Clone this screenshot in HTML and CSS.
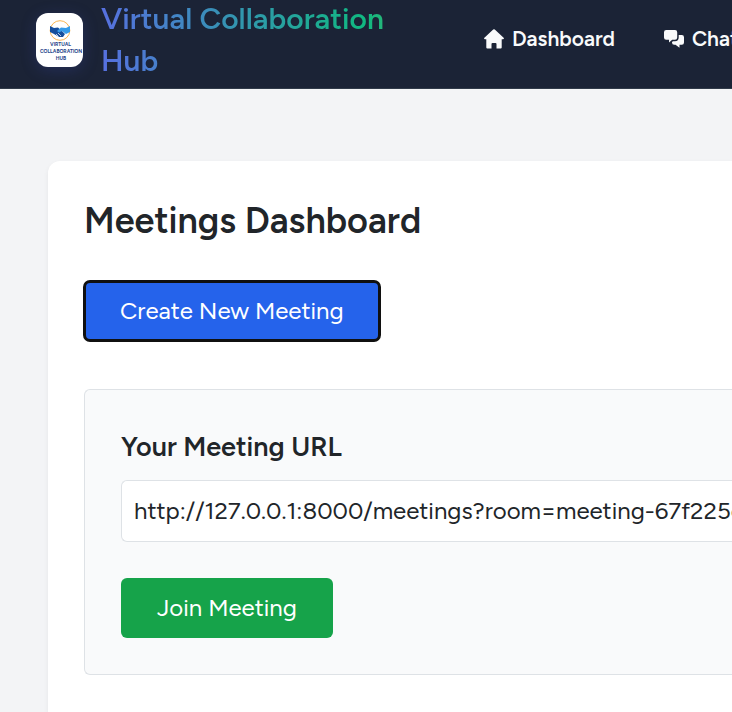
FILE: index.html
```html
<!DOCTYPE html>
<html lang="en">
<head>
<meta charset="utf-8">
<meta name="viewport" content="width=device-width, initial-scale=1">
<title>Meetings Dashboard</title>
<link rel="stylesheet" href="styles.css">
</head>
<body>
<header class="topbar">
  <a class="brand" href="#">
    <svg class="brand-logo" viewBox="0 0 47 54" aria-hidden="true">
      <circle cx="24" cy="17.500" r="9.800" fill="none" stroke="#f9b550" stroke-width="1"/>
      <path d="M14 13 18 15 22 14.500 26 18 29 21 27 24 23 24 18 21 14 19Z" fill="#174f9c"/>
      <path d="M34 13 30 15 25 14.500 21 18 23 19.500 26 18 30 21 34 19Z" fill="#369be8"/>
      <path d="m20 21 2.500 2.500m-.5-3.500 3 3" stroke="#fff" stroke-width=".7"/>
      <g class="logo-text" text-anchor="middle">
        <text x="24.500" y="33">VIRTUAL</text>
        <text x="25" y="40">COLLABORATION</text>
        <text x="25" y="47">HUB</text>
      </g>
    </svg>
    <span class="brand-name">Virtual Collaboration Hub</span>
  </a>
  <nav class="nav">
    <a class="nav-link" href="#">
      <svg class="icon" viewBox="0 0 20 20" aria-hidden="true"><path d="M9.200.6a1.200 1.200 0 0 1 1.600 0l8.800 8.200c.6.600.300 1.500-.6 1.500h-1.300V18.500q0 1-1 1H12.500V15q0-1-1-1H8.500q-1 0-1 1v4.500H3.300q-1 0-1-1v-8.200H1c-.9 0-1.200-.9-.6-1.500Z"/></svg>
      Dashboard
    </a>
    <a class="nav-link" href="#">
      <svg class="icon" viewBox="0 0 20 20" aria-hidden="true"><path d="M2.200 1H11q2.200 0 2.200 2.200v5.300q0 2.200-2.200 2.200H8.200L5 13.500v-2.800H2.200Q0 10.700 0 8.500V3.200Q0 1 2.200 1Z"/><path d="M14.700 6H17.800Q20 6 20 8.200v5.300q0 2.200-2.200 2.200H15.500v3.100l-4-3.100H10.200Q8 15.700 8 13.500V13l1-.8H11q3.700 0 3.700-3.700Z"/></svg>
      Chat
    </a>
  </nav>
</header>
<main class="card">
  <h1 class="title">Meetings Dashboard</h1>
  <button class="button create" type="button">Create New Meeting</button>
  <section class="panel">
    <label class="label" for="meeting-url">Your Meeting URL</label>
    <input class="url" id="meeting-url" type="text" readonly value="http://127.0.0.1:8000/meetings?room=meeting-67f225c">
    <button class="button join" type="button">Join Meeting</button>
  </section>
</main>
</body>
</html>
```
FILE: styles.css
```css
* { box-sizing: border-box; }
body {
  margin: 0;
  min-height: 100vh;
  display: flex;
  flex-direction: column;
  background: #f3f4f6;
  color: #212529;
  font: 400 24px/36px Figtree, Inter, sans-serif;
  overflow-x: hidden;
}
.topbar {
  display: flex;
  align-items: center;
  gap: 98px;
  height: 89px;
  padding: 0 0 9px 36px;
  background: #1b2336;
  border-bottom: 1px solid #303a49;
  overflow: hidden;
}
.brand {
  display: flex;
  align-items: center;
  gap: 18px;
  flex: none;
  text-decoration: none;
}
.brand-logo {
  width: 47px;
  height: 54px;
  border-radius: 12px;
  background: #fff;
  box-shadow: 0 3px 15px rgba(64, 78, 190, .25);
}
.logo-text {
  font: 700 5px Figtree, "Liberation Sans", sans-serif;
  fill: #1d4389;
}
.brand-name {
  width: 285px;
  font-size: 30px;
  font-weight: 600;
  line-height: 42px;
  background: linear-gradient(90deg, #5770e0, #10b981 93%, #28b478);
  background-clip: text;
  -webkit-background-clip: text;
  color: transparent;
}
.nav {
  display: flex;
  gap: 49px;
  padding-bottom: 2px;
}
.nav-link {
  display: flex;
  align-items: center;
  gap: 8px;
  color: #f9fafb;
  font-size: 21px;
  font-weight: 600;
  white-space: nowrap;
  text-decoration: none;
}
.icon {
  width: 20px;
  height: 20px;
  flex: none;
  fill: currentColor;
}
.card {
  flex: 1;
  margin: 72px 0 0 48px;
  padding: 36px 0 36px 36px;
  background: #fff;
  border-radius: 12px 0 0 0;
  box-shadow: 0 2px 5px rgba(0, 0, 0, .06);
}
.title {
  margin: 0 0 36px;
  font-size: 36px;
  font-weight: 600;
  line-height: 48px;
}
.button {
  display: block;
  padding: 12px 36px;
  border: 0;
  border-radius: 6px;
  color: #fff;
  font: inherit;
  white-space: nowrap;
}
.create {
  background: #2563eb;
  outline: 3px solid #101010;
  outline-offset: -2px;
}
.panel {
  margin-top: 48px;
  padding: 36px 0 36px 36px;
  background: #f9fafb;
  border: 1px solid #dee2e6;
  border-right: 0;
  border-radius: 6px 0 0 6px;
}
.label {
  display: block;
  margin-bottom: 12px;
  font-size: 27px;
  font-weight: 600;
  line-height: 42px;
}
.url {
  display: block;
  width: 100%;
  height: 62px;
  margin-bottom: 36px;
  padding: 11px 0 13px 12px;
  background: #fff;
  border: 1px solid #dee2e6;
  border-right: 0;
  border-radius: 6px 0 0 6px;
  color: inherit;
  font: inherit;
}
.join { background: #16a34a; }
```
